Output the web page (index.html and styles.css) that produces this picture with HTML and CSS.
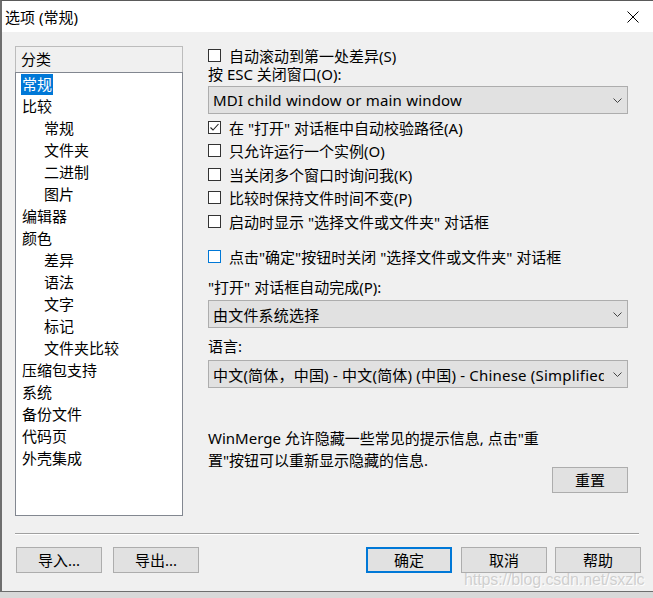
FILE: index.html
```html
<!DOCTYPE html>
<html lang="zh-CN">
<head>
<meta charset="utf-8">
<title>选项 (常规)</title>
<link rel="stylesheet" href="styles.css">
</head>
<body>
<div class="window">
  <div class="titlebar">
    <span class="title">选项 (常规)</span>
    <svg class="close" width="12" height="12" viewBox="0 0 12 12"><path d="M0.5 0.5L11.5 11.5M11.5 0.5L0.5 11.5" stroke="#000" stroke-width="1" fill="none"/></svg>
  </div>
  <div class="client">
    <div class="main">
      <div class="cat">
        <div class="cat-head">分类</div>
        <ul class="cat-list">
          <li class="l1"><span class="item sel">常规</span></li>
          <li class="l1"><span class="item">比较</span></li>
          <li class="l2"><span class="item">常规</span></li>
          <li class="l2"><span class="item">文件夹</span></li>
          <li class="l2"><span class="item">二进制</span></li>
          <li class="l2"><span class="item">图片</span></li>
          <li class="l1"><span class="item">编辑器</span></li>
          <li class="l1"><span class="item">颜色</span></li>
          <li class="l2"><span class="item">差异</span></li>
          <li class="l2"><span class="item">语法</span></li>
          <li class="l2"><span class="item">文字</span></li>
          <li class="l2"><span class="item">标记</span></li>
          <li class="l2"><span class="item">文件夹比较</span></li>
          <li class="l1"><span class="item">压缩包支持</span></li>
          <li class="l1"><span class="item">系统</span></li>
          <li class="l1"><span class="item">备份文件</span></li>
          <li class="l1"><span class="item">代码页</span></li>
          <li class="l1"><span class="item">外壳集成</span></li>
        </ul>
      </div>
      <div class="opts">
        <div class="row cb-first"><span class="box"></span><span>自动滚动到第一处差异(S)</span></div>
        <div class="label lbl-esc">按 ESC 关闭窗口(O):</div>
        <div class="combo combo-esc"><span class="combo-text">MDI child window or main window</span><svg class="chev" width="9" height="5" viewBox="0 0 9 5"><path d="M0.5 0.5L4.5 4.5L8.5 0.5" stroke="#444" stroke-width="1" fill="none"/></svg></div>
        <div class="row cb-list"><span class="box"><svg width="11" height="11" viewBox="0 0 11 11"><path d="M1.5 5.5L4 8L9.5 2" stroke="#222" stroke-width="1.1" fill="none"/></svg></span><span>在 "打开" 对话框中自动校验路径(A)</span></div>
        <div class="row"><span class="box"></span><span>只允许运行一个实例(O)</span></div>
        <div class="row"><span class="box"></span><span>当关闭多个窗口时询问我(K)</span></div>
        <div class="row"><span class="box"></span><span>比较时保持文件时间不变(P)</span></div>
        <div class="row"><span class="box"></span><span>启动时显示 "选择文件或文件夹" 对话框</span></div>
        <div class="row cb-hover"><span class="box box-hover"></span><span>点击"确定"按钮时关闭 "选择文件或文件夹" 对话框</span></div>
        <div class="label lbl-open">"打开" 对话框自动完成(P):</div>
        <div class="combo combo-open"><span class="combo-text">由文件系统选择</span><svg class="chev" width="9" height="5" viewBox="0 0 9 5"><path d="M0.5 0.5L4.5 4.5L8.5 0.5" stroke="#444" stroke-width="1" fill="none"/></svg></div>
        <div class="label lbl-lang">语言:</div>
        <div class="combo combo-lang"><span class="combo-text">中文(简体，中国) - 中文(简体) (中国) - Chinese (Simplified, China)</span><svg class="chev" width="9" height="5" viewBox="0 0 9 5"><path d="M0.5 0.5L4.5 4.5L8.5 0.5" stroke="#444" stroke-width="1" fill="none"/></svg></div>
        <p class="info">WinMerge 允许隐藏一些常见的提示信息, 点击"重<br>置"按钮可以重新显示隐藏的信息.</p>
        <button class="btn btn-reset">重置</button>
      </div>
    </div>
    <div class="sep"></div>
    <div class="buttons">
      <button class="btn btn-import">导入...</button>
      <button class="btn btn-export">导出...</button>
      <button class="btn btn-ok">确定</button>
      <button class="btn btn-cancel">取消</button>
      <button class="btn btn-help">帮助</button>
    </div>
  </div>
  <div class="watermark">https://blog.csdn.net/sxzlc</div>
</div>
</body>
</html>
```

FILE: styles.css
```css
html, body {
  margin: 0;
  padding: 0;
}
body {
  width: 653px;
  height: 598px;
  overflow: hidden;
  background: #d9d9d9;
  font-family: "Noto Sans", "Noto Sans CJK SC", sans-serif;
  font-size: 15px;
  color: #000;
}
.window {
  position: relative;
  box-sizing: border-box;
  height: 592px;
  border-top: 1px solid #5a5a5a;
  border-left: 2px solid #6e6e6e;
  border-bottom: 1px solid #6e6e6e;
  background: #f0f0f0;
  display: flex;
  flex-direction: column;
}
.titlebar {
  height: 31px;
  background: #fff;
  display: flex;
  align-items: center;
  justify-content: space-between;
  padding: 0 14px 0 3px;
}
.title {
  font-size: 15px;
  line-height: 31px;
  padding-top: 1px;
}
.close {
  display: block;
  margin-top: 1px;
}
.client {
  flex: 1;
  padding: 14px 0 0 13px;
}
.main {
  display: flex;
  align-items: flex-start;
}
.cat {
  width: 168px;
}
.cat-head {
  box-sizing: border-box;
  height: 26px;
  border: 1px solid #bcbcbc;
  border-bottom: none;
  line-height: 25px;
  padding-left: 5px;
}
.cat-list {
  box-sizing: border-box;
  height: 444px;
  margin: 0;
  padding: 1px 0 0 0;
  list-style: none;
  background: #fff;
  border: 1px solid #828790;
}
.cat-list li {
  height: 22px;
}
.cat-list .l1 {
  padding-left: 5px;
}
.cat-list .l2 {
  padding-left: 27px;
}
.item {
  display: inline-block;
  height: 21px;
  line-height: 21px;
  padding: 0 1px;
}
.item.sel {
  background: #0078d7;
  color: #fff;
}
.opts {
  width: 420px;
  margin-left: 25px;
  display: flex;
  flex-direction: column;
}
.row {
  display: flex;
  align-items: center;
  height: 23.5px;
  white-space: nowrap;
}
.cb-first {
  height: 18px;
  margin-bottom: 1px;
}
.cb-list {
  margin-top: 1.5px;
}
.cb-hover {
  margin-top: 11.5px;
}
.box {
  box-sizing: border-box;
  width: 13px;
  height: 13px;
  border: 1px solid #333;
  background: #fff;
  margin-right: 8px;
  flex: none;
  display: flex;
  align-items: center;
  justify-content: center;
}
.box svg {
  display: block;
}
.box-hover {
  border-color: #0078d7;
}
.label {
  height: 18px;
  line-height: 18px;
  white-space: nowrap;
}
.lbl-open {
  margin-top: 10px;
}
.lbl-lang {
  margin-top: 9px;
}
.combo {
  box-sizing: border-box;
  height: 28px;
  display: flex;
  align-items: center;
  background: #e1e1e1;
  border: 1px solid #adadad;
  padding-left: 4px;
}
.combo-esc {
  margin-top: 3px;
}
.combo-open {
  margin-top: 4px;
}
.combo-lang {
  margin-top: 5px;
}
.combo-text {
  flex: 1;
  min-width: 0;
  overflow: hidden;
  white-space: nowrap;
  letter-spacing: 0.2px;
}
.chev {
  display: block;
  flex: none;
  margin: 1px 5px 0 9px;
}
.info {
  margin: 39px 0 0 0;
  line-height: 22px;
  height: 44px;
}
.btn {
  box-sizing: border-box;
  height: 26px;
  width: 86px;
  padding: 0;
  margin: 0;
  font-family: inherit;
  font-size: 15px;
  color: #000;
  background: #e1e1e1;
  border: 1px solid #adadad;
  line-height: 22px;
}
.btn-reset {
  width: 76px;
  align-self: flex-end;
  margin-top: -4px;
}
.sep {
  width: 624px;
  height: 1px;
  margin-top: 17px;
  margin-left: 0;
  background: #a0a0a0;
  border-bottom: 1px solid #fff;
}
.buttons {
  display: flex;
  margin-top: 12px;
}
.btn-import {
  margin-left: 1px;
}
.btn-export {
  margin-left: 11px;
}
.btn-ok {
  margin-left: 167px;
  border: 2px solid #0078d7;
}
.btn-cancel {
  margin-left: 9px;
}
.btn-help {
  margin-left: 8px;
}
.watermark {
  position: absolute;
  left: 462px;
  top: 570px;
  font-family: "Liberation Sans", Arial, sans-serif;
  font-size: 16px;
  color: rgba(200, 200, 200, 0.85);
  text-shadow: 1px 1px 0 rgba(255, 255, 255, 0.9);
  white-space: nowrap;
  letter-spacing: -0.1px;
}
```
